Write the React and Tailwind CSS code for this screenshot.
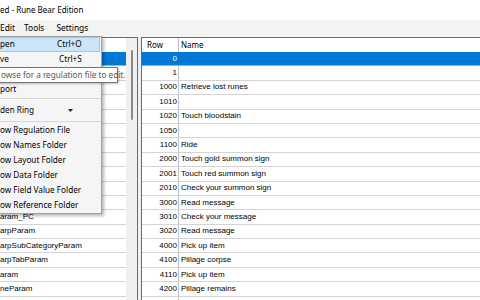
import React from "react";

const tableRows = [
  ["0", ""],
  ["1", ""],
  ["1000", "Retrieve lost runes"],
  ["1010", ""],
  ["1020", "Touch bloodstain"],
  ["1050", ""],
  ["1100", "Ride"],
  ["2000", "Touch gold summon sign"],
  ["2001", "Touch red summon sign"],
  ["2010", "Check your summon sign"],
  ["3000", "Read message"],
  ["3010", "Check your message"],
  ["3020", "Read message"],
  ["4000", "Pick up item"],
  ["4100", "Pillage corpse"],
  ["4110", "Pick up item"],
  ["4200", "Pillage remains"],
  ["", ""],
];

const leftRows = [
  "", "", "", "", "", "", "", "", "", "", "",
  "aram_PC",
  "arpParam",
  "arpSubCategoryParam",
  "arpTabParam",
  "aram",
  "neParam",
  "",
];

const showItems = [
  "ow Regulation File",
  "ow Names Folder",
  "ow Layout Folder",
  "ow Data Folder",
  "ow Field Value Folder",
  "ow Reference Folder",
];

function Sep() {
  return (
    <div className="h-[4px] flex items-center">
      <div className="h-px w-full bg-[#d7d7d7]" />
    </div>
  );
}

export default function App() {
  return (
    <div className="relative w-[480px] h-[300px] overflow-hidden bg-[#f0f0f0] text-black font-['Noto_Sans',sans-serif]">
      {/* Title bar */}
      <div className="h-[20px] bg-white flex items-center text-[8px] leading-none">
        <span>ed - Rune Bear Edition</span>
      </div>
      {/* Menu bar */}
      <div className="h-[17px] bg-[#f3f3f3] flex items-center text-[8.4px] leading-none">
        <span className="ml-0">Edit</span>
        <span className="ml-[9px]">Tools</span>
        <span className="ml-[12px]">Settings</span>
      </div>
      {/* Main area */}
      <div className="flex h-[263px]">
        {/* Left panel */}
        <div className="w-[138px] flex border-t border-r border-[#6b6b6b] bg-white">
          <div className="w-[126px] flex flex-col overflow-hidden font-['Liberation_Sans',Arial,sans-serif] text-[8px] leading-none">
            <div className="h-[14px] shrink-0 bg-white" />
            {leftRows.map((t, i) => (
              <div
                key={i}
                className={
                  i === 0
                    ? "h-[14.4px] shrink-0 flex items-center bg-[#0078d7] text-white border-b border-[#7fb7e9]"
                    : "h-[14.4px] shrink-0 flex items-center border-b border-[#d4d4d4] whitespace-nowrap"
                }
              >
                {t}
              </div>
            ))}
          </div>
          <div className="w-[11px] bg-[#f0f0f0] flex flex-col">
            <div className="ml-[5px] mt-[12px] w-[2px] h-[70px] rounded-full bg-[#8a8a8a]" />
          </div>
        </div>
        <div className="w-[3px]" />
        {/* Right panel */}
        <div className="flex-1 flex flex-col border-t border-l border-[#6b6b6b] bg-white overflow-hidden">
          <div className="h-[14px] shrink-0 flex text-[8px] leading-none">
            <div className="w-[37px] border-r border-[#bfbfbf] flex items-center pl-[5px]">Row</div>
            <div className="flex items-center pl-[2px]">Name</div>
          </div>
          <div className="flex flex-col font-['Liberation_Sans',Arial,sans-serif] text-[8px] leading-none">
            {tableRows.map(([n, name], i) => (
              <div
                key={i}
                className={
                  i === 0
                    ? "h-[14.4px] shrink-0 flex bg-[#0078d7] text-white border-b border-[#7fb7e9]"
                    : "h-[14.4px] shrink-0 flex border-b border-[#d4d4d4]"
                }
              >
                <div
                  className={
                    i === 0
                      ? "w-[37px] border-r border-[#0078d7] flex items-center justify-end pr-[1px]"
                      : "w-[37px] border-r border-[#bfbfbf] flex items-center justify-end pr-[1px]"
                  }
                >
                  {n}
                </div>
                <div className="flex items-center pl-[2px] whitespace-nowrap">{name}</div>
              </div>
            ))}
          </div>
        </div>
      </div>

      {/* Dropdown menu */}
      <div className="absolute left-[-3px] top-[36px] w-[105px] h-[178px] bg-[#f5f5f5] border border-[#a0a0a0] shadow-[2px_2px_3px_rgba(0,0,0,0.28)] flex flex-col text-[8.2px] leading-none">
        <div className="h-[15px] shrink-0 flex items-center bg-[#cce4f7] border border-[#99c9ef] mr-[1px]">
          <span className="w-[58px] pl-[1px]">pen</span>
          <span>Ctrl+O</span>
        </div>
        <div className="h-[15px] shrink-0 flex items-center">
          <span className="w-[61px] pl-[2px]">ve</span>
          <span>Ctrl+S</span>
        </div>
        <div className="h-[15px] shrink-0" />
        <div className="h-[15px] shrink-0 flex items-center">
          <span className="pl-[2px]">port</span>
        </div>
        <Sep />
        <div className="h-[19px] shrink-0 flex items-center">
          <span className="w-[70px] pl-[2px]">den Ring</span>
          <svg width="5" height="3" viewBox="0 0 5 3">
            <path d="M0 0 L5 0 L2.5 3 Z" fill="#222" />
          </svg>
        </div>
        <Sep />
        {showItems.map((t) => (
          <div key={t} className="h-[15px] shrink-0 flex items-center">
            <span className="pl-[2px]">{t}</span>
          </div>
        ))}
      </div>

      {/* Tooltip */}
      <div className="absolute left-[-2px] top-[67px] w-[120px] h-[16px] bg-white border border-[#767676] shadow-[1px_1px_2px_rgba(0,0,0,0.25)] flex items-center text-[8.2px] leading-none text-[#575757]">
        <span className="pl-[2px] whitespace-nowrap">owse for a regulation file to edit.</span>
      </div>
    </div>
  );
}
